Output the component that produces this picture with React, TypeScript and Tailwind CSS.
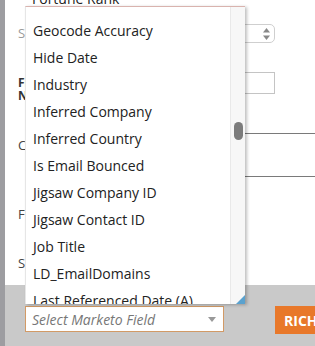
const items = [
  "Geocode Accuracy",
  "Hide Date",
  "Industry",
  "Inferred Company",
  "Inferred Country",
  "Is Email Bounced",
  "Jigsaw Company ID",
  "Jigsaw Contact ID",
  "Job Title",
  "LD_EmailDomains",
  "Last Referenced Date (A)",
];

const FieldList = () => {
  return (
    <>
      {/* text peeking above the open list */}
      <div className="absolute left-[32px] top-[-8px] text-[14px] leading-[14px] text-[#222]">
        Fortune Rank
      </div>
      <div className="absolute left-[25px] top-[6px] w-[220px] h-[298px] bg-white border-t border-[#d9b3ae] border-l border-l-[#e6e6e6] shadow-[2px_1px_3px_rgba(0,0,0,0.25)] overflow-hidden flex">
        <div className="flex-1 pt-[10px] pl-[7px]">
          {items.map((item) => (
            <div key={item} className="h-[27px] leading-[27px] text-[14px] text-[#222] whitespace-nowrap">
              {item}
            </div>
          ))}
        </div>
        <div className="relative w-[15px] bg-[#f7f7f7] border-l border-[#e9e9e9]">
          <div className="absolute left-[3px] top-[115px] w-[9px] h-[18px] rounded-full bg-[#7c7c7c]" />
        </div>
        <svg className="absolute right-0 bottom-0" width="9" height="9" viewBox="0 0 9 9">
          <polygon points="9,0 9,9 0,9" fill="#5aa2cf" />
        </svg>
      </div>
    </>
  );
};

export default function App() {
  return (
    <div className="relative w-[315px] h-[346px] overflow-hidden flex font-['Open_Sans',sans-serif]">
      {/* left gutter */}
      <div className="w-[5px] shrink-0 bg-[#9d9da1]" />

      <div className="flex-1 min-w-0 flex flex-col">
        {/* form behind the list */}
        <div className="h-[285px] bg-white pl-[13px] text-[13px]">
          <div className="mt-[24px] h-[19px] flex items-center justify-between pr-[40px]">
            <span className="text-[#9a9a9a]">Status</span>
            <div className="w-[145px] h-[19px] rounded-r-[5px] border border-[#cfcfcf] flex items-center justify-end pr-[4px]">
              <svg width="7" height="12" viewBox="0 0 7 12">
                <polygon points="3.5,0 7,4.5 0,4.5" fill="#888" />
                <polygon points="0,7.5 7,7.5 3.5,12" fill="#888" />
              </svg>
            </div>
          </div>

          <div className="mt-[29px] h-[22px] flex items-start justify-between pr-[40px]">
            <span className="mt-[4px] font-bold leading-[13px] text-[12px] text-[#333]">
              Field
              <br />
              Name
            </span>
            <div className="w-[125px] h-[22px] border border-[#c4c4c4]" />
          </div>

          <div className="mt-[39px] h-[44px] flex items-start">
            <span className="mt-[3px] text-[#444]">Comment</span>
            <div className="ml-auto w-[185px] h-[44px] border-t border-b border-[#7a7a7a]" />
          </div>

          <div className="mt-[28px] text-[#444]">Filter</div>
          <div className="mt-[29px] text-[#444]">Source</div>
        </div>

        {/* bottom band */}
        <div className="flex-1 overflow-hidden bg-[#c9c9c9] pl-[20px] pt-[21px] flex items-start">
          <div className="w-[199px] shrink-0 h-[26px] bg-white border border-[#d29a66] flex items-center pl-[6px] pr-[7px]">
            <span className="italic text-[14px] text-[#777]">Select Marketo Field</span>
            <svg className="ml-auto" width="8" height="5" viewBox="0 0 8 5">
              <polygon points="0,0 8,0 4,5" fill="#999" />
            </svg>
          </div>
          <button className="ml-[51px] shrink-0 w-[100px] h-[28px] bg-[#e8782a] text-white font-bold text-[14px] text-left pl-[9px] whitespace-nowrap">
            RICH TEXT
          </button>
        </div>
      </div>

      <FieldList />
    </div>
  );
}
